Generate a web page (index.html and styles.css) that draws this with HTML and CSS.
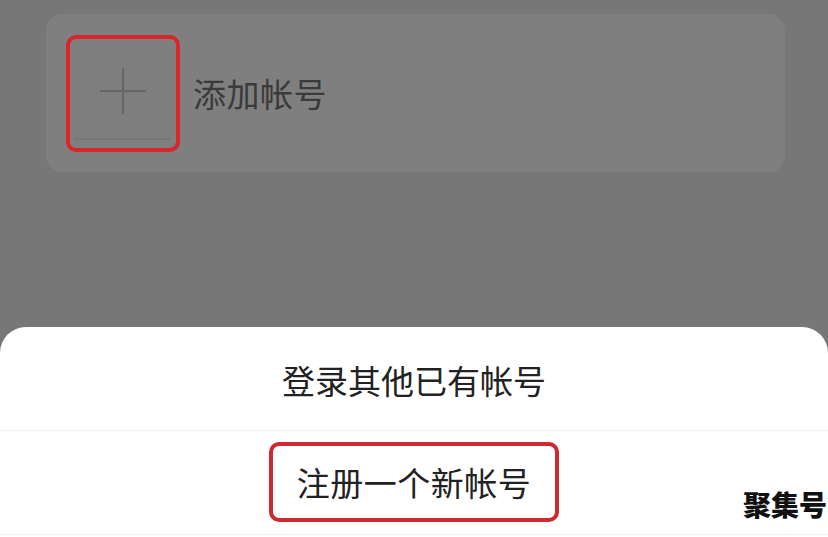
FILE: index.html
```html
<!DOCTYPE html>
<html lang="zh">
<head>
<meta charset="utf-8">
<link rel="stylesheet" href="styles.css">
</head>
<body>
<div class="page">
  <div class="top">
    <div class="card">
      <div class="add-frame">
        <div class="add-box">
          <svg width="46" height="46" viewBox="0 0 46 46"><path d="M0 23H46M23 0V46" stroke="#666" stroke-width="2" fill="none"/></svg>
        </div>
      </div>
      <span class="add-label">添加帐号</span>
    </div>
  </div>
  <div class="sheet">
    <div class="row first">登录其他已有帐号</div>
    <div class="row second"><div class="reg">注册一个新帐号</div></div>
  </div>
  <div class="mark">聚集号</div>
</div>
</body>
</html>
```
FILE: styles.css
```css
html, body { margin: 0; padding: 0; }
body { width: 828px; height: 537px; overflow: hidden; background: #777; font-family: "Noto Sans CJK SC", "Noto Sans", sans-serif; }
.page { position: relative; width: 828px; height: 537px; display: flex; flex-direction: column; }
.top { height: 327px; padding: 14px 43px 0 46px; box-sizing: border-box; }
.card { height: 158px; background: #7f7f7f; border-radius: 16px; display: flex; align-items: center; padding-left: 20px; box-sizing: border-box; }
.add-frame { width: 114px; height: 117px; box-sizing: border-box; border: 4px solid #d8262b; border-radius: 10px; padding: 4px 5px 8px 4px; margin-top: 1px; }
.add-box { width: 100%; height: 100%; background: #7e7e7e; border-bottom: 2px solid #777; display: flex; align-items: center; justify-content: center; box-sizing: border-box; }
.add-label { margin-left: 13px; font-size: 33px; color: #3a3a3a; letter-spacing: 0.5px; }
.sheet { flex: 1; background: #fff; border-radius: 26px 26px 0 0; display: flex; flex-direction: column; }
.row { display: flex; align-items: center; justify-content: center; font-size: 33px; color: #222; }
.first { height: 104px; border-bottom: 1px solid #f1f1f1; padding-top: 2px; box-sizing: border-box; }
.second { padding-top: 11px; border-bottom: 1px solid #f1f1f1; height: 104px; align-items: flex-start; box-sizing: border-box; }
.reg { width: 290px; height: 80px; box-sizing: border-box; border: 4px solid #cc2a2e; border-radius: 10px; display: flex; align-items: center; justify-content: center; letter-spacing: 0.5px; }
.mark { position: absolute; right: 1px; top: 484px; font-size: 28px; font-weight: 900; color: #111; background: #fff; line-height: 40px; padding-left: 6px; }
```
